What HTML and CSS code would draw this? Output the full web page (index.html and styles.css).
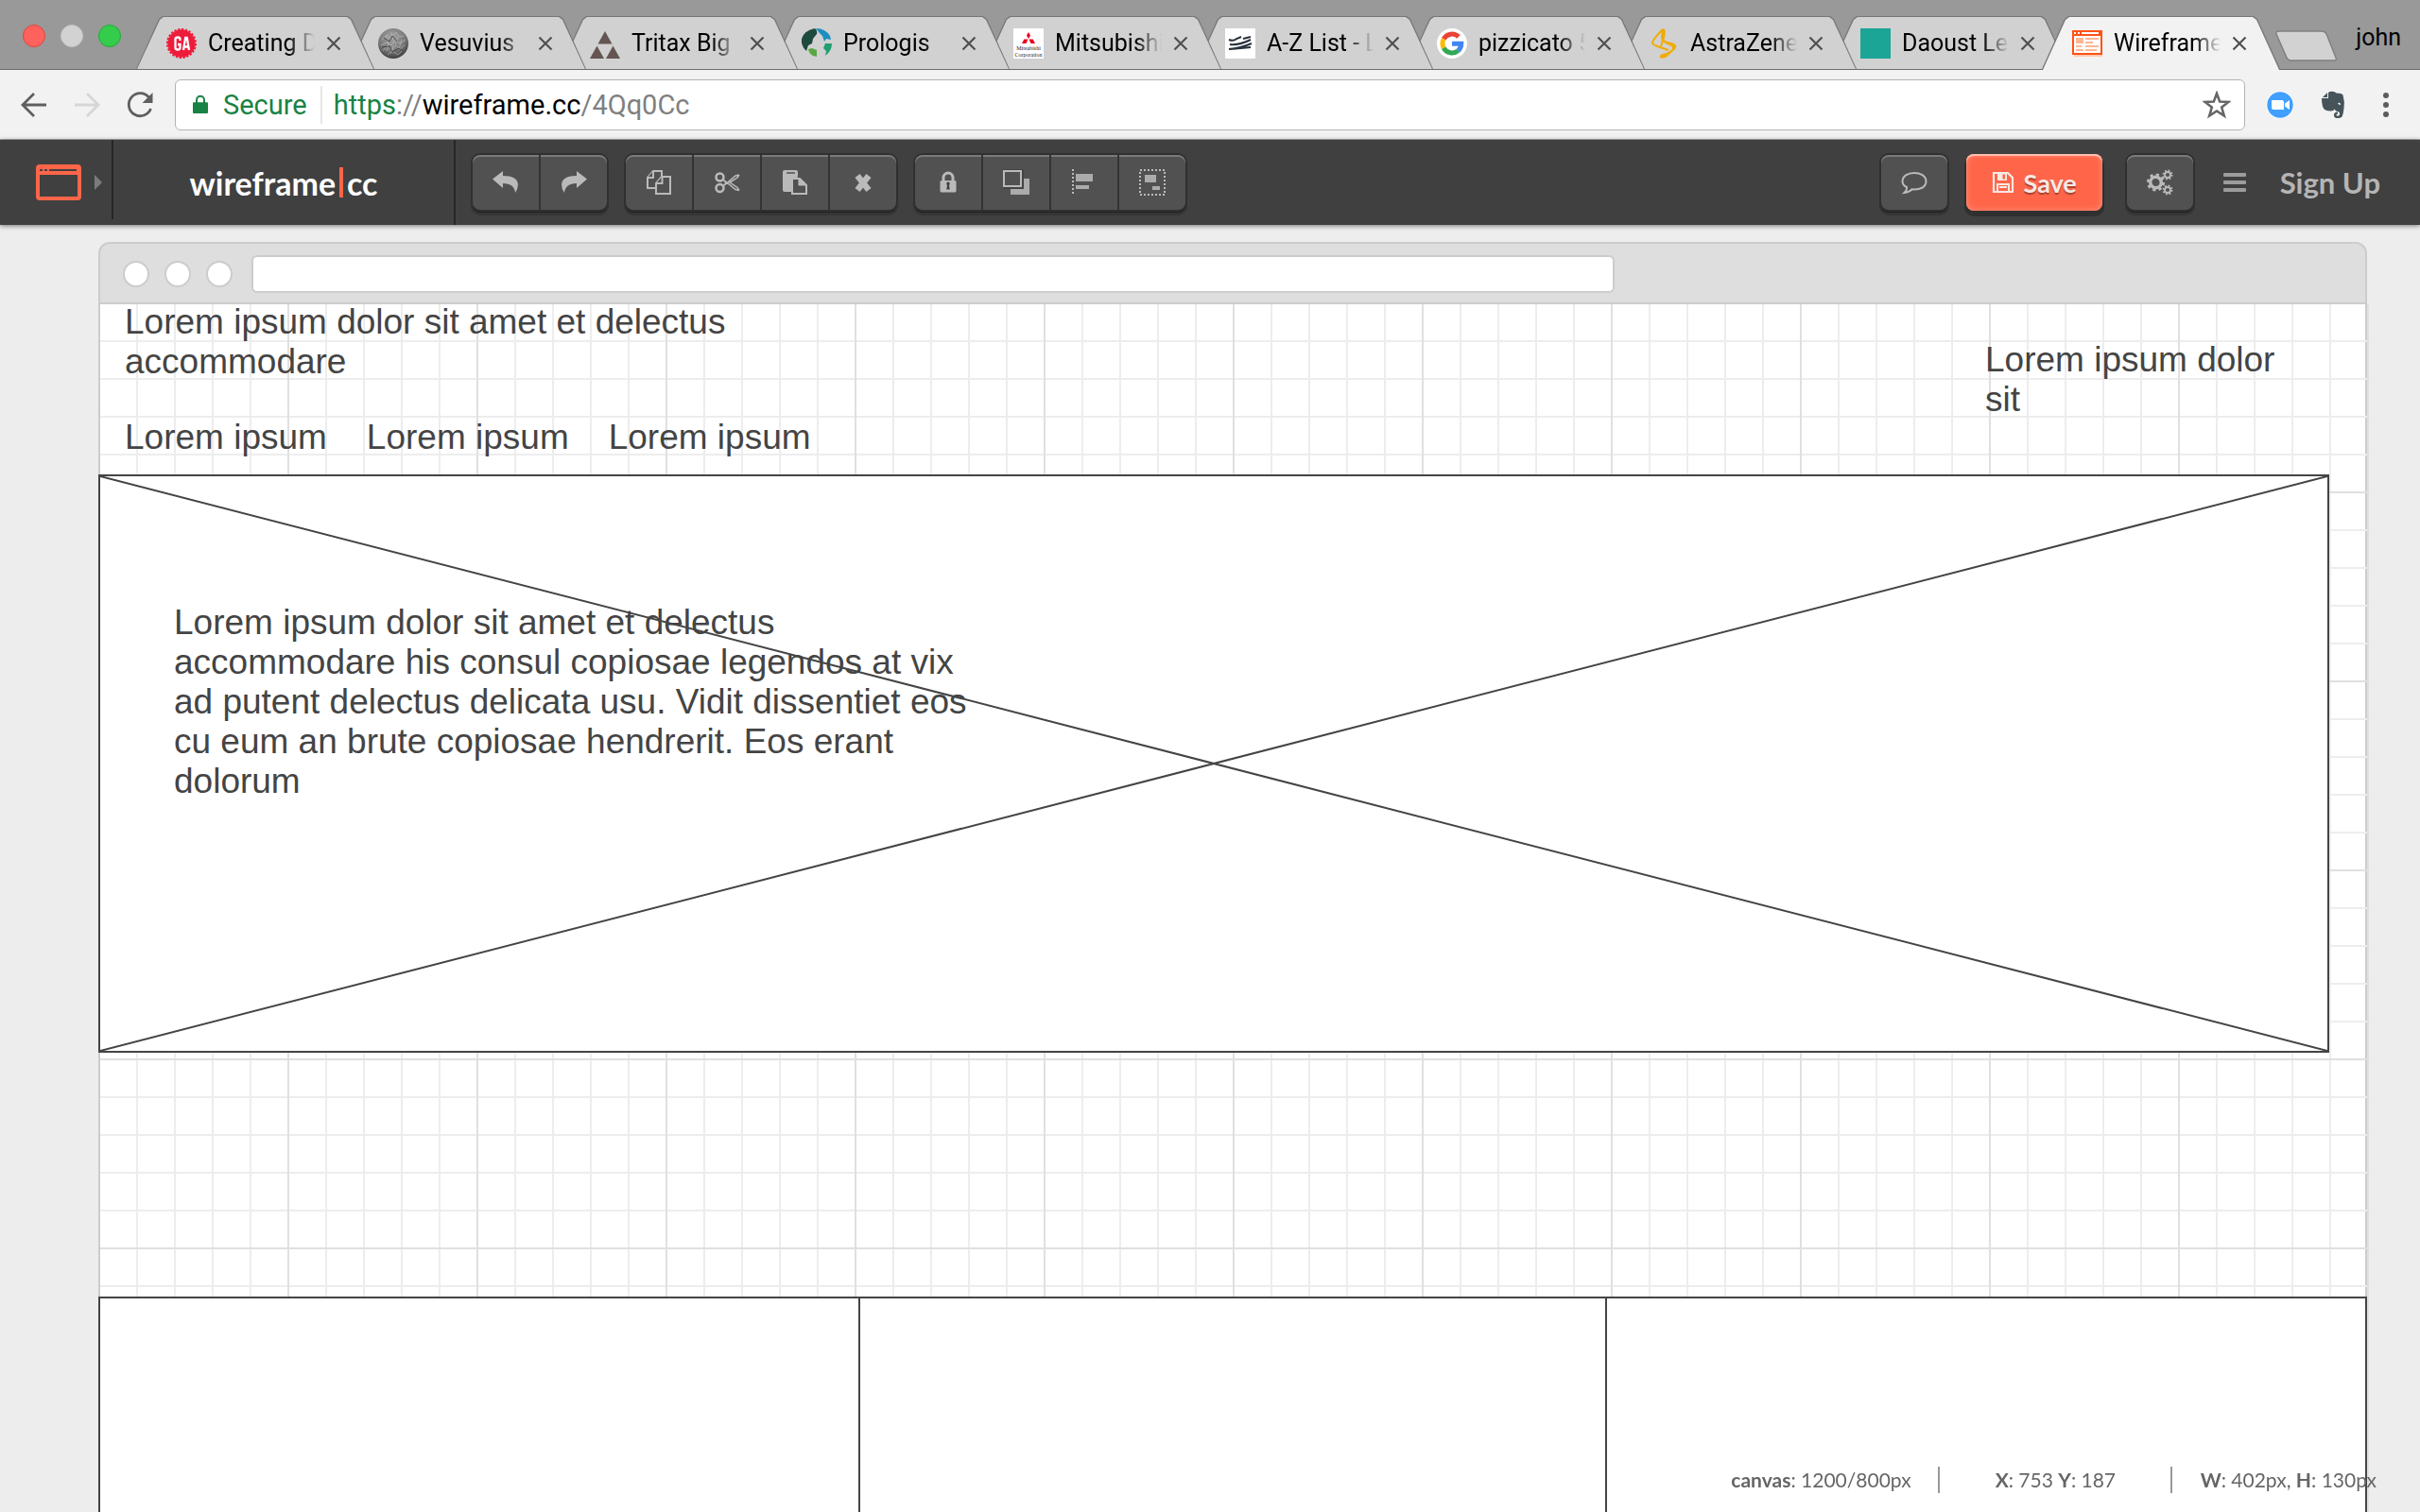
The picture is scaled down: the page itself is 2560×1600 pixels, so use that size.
FILE: index.html
```html
<!DOCTYPE html>
<html lang="en">
<head>
<meta charset="utf-8">
<title>Wireframe.cc</title>
<link rel="stylesheet" href="styles.css">
</head>
<body>
<svg class="defs" aria-hidden="true">
  <symbol id="close" viewBox="0 0 16 16"><path d="M1.500 1.500 14.500 14.500M14.500 1.500 1.500 14.500" fill="none" stroke="#505050" stroke-width="2.200"/></symbol>
</svg>

<header class="tabstrip">
  <div class="lights">
    <button class="light red" aria-label="Close window"></button>
    <button class="light grey" aria-label="Minimise window"></button>
    <button class="light green" aria-label="Zoom window"></button>
  </div>
  <nav class="tabs">
    <div class="tab">
      <svg class="favicon" viewBox="0 0 32 32"><circle cx="16" cy="16" r="14.500" fill="#ee1c3b"/><circle cx="16" cy="16" r="15" fill="none" stroke="#ee1c3b" stroke-width="2" stroke-dasharray="2.400 1.500"/><path d="M14.500 13v-1.500q0-2-2.500-2t-2.500 2v9q0 2 2.500 2t2.500-2V17h-2.500M18 23l2.200-13h1.600L24 23M18.600 19.500h4.800" fill="none" stroke="#fff" stroke-width="2.300"/></svg>
      <span class="label">Creating D</span>
      <button class="close" aria-label="Close tab"><svg viewBox="0 0 16 16"><use href="#close"/></svg></button>
    </div>
    <div class="tab">
      <svg class="favicon" viewBox="0 0 32 32"><defs><radialGradient id="rock" cx=".45" cy=".3" r=".75"><stop offset="0" stop-color="#a5a5a5"/><stop offset=".6" stop-color="#777"/><stop offset="1" stop-color="#333"/></radialGradient></defs><circle cx="16" cy="16" r="16" fill="url(#rock)"/><path d="M4 12l5-5 4 4 6-7 3 5 5-1M3 18l6-3 5 3 4-6 5 4 6-4M5 24l4-5 6 4 4-5 4 4 5-4M10 28l5-4 6 4 4-4M8 8l3 8M14 4l2 8M21 9l-3 8M25 12l-3 10M11 16l-2 8M16 18l-2 8" fill="none" stroke="#c2c2c2" stroke-width="1" opacity=".6"/><path d="M6 10l6 4 3-6 5 6M4 20l8-1 3 6 7-4 4 3" fill="none" stroke="#444" stroke-width="1"/></svg>
      <span class="label">Vesuvius</span>
      <button class="close" aria-label="Close tab"><svg viewBox="0 0 16 16"><use href="#close"/></svg></button>
    </div>
    <div class="tab">
      <svg class="favicon" viewBox="0 0 32 32" fill="#655552"><path d="M16 3l7.500 13.500h-15zM7.500 18.500 15 32H0zM24.500 18.500 32 32H17z"/></svg>
      <span class="label">Tritax Big B</span>
      <button class="close" aria-label="Close tab"><svg viewBox="0 0 16 16"><use href="#close"/></svg></button>
    </div>
    <div class="tab">
      <svg class="favicon" viewBox="0 0 32 32"><path d="M14 0q3 2 2 6l-4 5-1 5-4 2-2 6Q-1 18 0 11 3 2 14 0z" fill="#1f4a3f"/><path d="M15 0q10 0 15 8l1 4-5-1-2 3-2-6-3-3z" fill="#1c8fc0"/><path d="M32 16q0 8-7 13l1-5-3-3 2-5z" fill="#1f9f72"/><path d="M7 22l4-1 5 2v7l-4-1q-4-2-5-7z" fill="#58a840"/></svg>
      <span class="label">Prologis</span>
      <button class="close" aria-label="Close tab"><svg viewBox="0 0 16 16"><use href="#close"/></svg></button>
    </div>
    <div class="tab">
      <svg class="favicon" viewBox="0 0 32 32"><path fill="#fff" d="M0 0h32v32H0z"/><path fill="#e60020" d="M16 4l2 3.500-2 3.500-2-3.500zM15.500 11.500 13.500 16H9l2.300-4.500zM16.500 11.500l2 4.500H23l-2.300-4.500z"/><text class="mini" x="16" y="23" text-anchor="middle">Mitsubishi</text><text class="mini" x="16" y="30" text-anchor="middle">Corporation</text></svg>
      <span class="label">Mitsubishi</span>
      <button class="close" aria-label="Close tab"><svg viewBox="0 0 16 16"><use href="#close"/></svg></button>
    </div>
    <div class="tab">
      <svg class="favicon" viewBox="0 0 32 32"><path fill="#fff" d="M0 0h32v32H0z"/><path d="M4 12q5 2 8-1l5-2M19 11l8-2M5 17q10 1 22-5M4 22q12-1 24-6M5 22q12-1 22-2" fill="none" stroke="#27303d" stroke-width="2"/></svg>
      <span class="label">A-Z List - L</span>
      <button class="close" aria-label="Close tab"><svg viewBox="0 0 16 16"><use href="#close"/></svg></button>
    </div>
    <div class="tab">
      <svg class="favicon" viewBox="0 0 32 32"><circle cx="16" cy="16" r="16" fill="#fff"/><g fill="none" stroke-width="5"><path d="M23 8.900A10 10 0 0 0 7.200 11.300" stroke="#ea4335"/><path d="M7.200 11.300a10 10 0 0 0 0 9.400" stroke="#fbbc05"/><path d="M7.200 20.700A10 10 0 0 0 22.500 23.600" stroke="#34a853"/><path d="M22.500 23.600A10 10 0 0 0 25.800 16.200H16" stroke="#4285f4"/></g></svg>
      <span class="label">pizzicato 5</span>
      <button class="close" aria-label="Close tab"><svg viewBox="0 0 16 16"><use href="#close"/></svg></button>
    </div>
    <div class="tab">
      <svg class="favicon" viewBox="0 0 32 32"><path d="M15 1Q5 11 4 15q0 2 5 4l12 4M15 1q3 1 1 9l-3 9" fill="none" stroke="#f2ab00" stroke-width="2"/><path d="M14 10q3 4 10 5 8 2 4 7-5 5-10 9-8 2-6-2 1-2 7-3l5-3q3-3-2-5-7-2-8-8z" fill="#f2ab00"/><path d="M14 1q4 0 3 5l-3 9-1-6z" fill="#f2ab00"/></svg>
      <span class="label">AstraZene</span>
      <button class="close" aria-label="Close tab"><svg viewBox="0 0 16 16"><use href="#close"/></svg></button>
    </div>
    <div class="tab">
      <svg class="favicon" viewBox="0 0 32 32"><path fill="#1aa596" d="M0 0h32v32H0z"/></svg>
      <span class="label">Daoust Les</span>
      <button class="close" aria-label="Close tab"><svg viewBox="0 0 16 16"><use href="#close"/></svg></button>
    </div>
    <div class="tab active">
      <svg class="favicon" viewBox="0 0 32 32"><path fill="#ffc9b3" d="M2 28h30v2H2z"/><path fill="#ff5216" d="M0 2h32v26H0z"/><path fill="#fff" d="M2 4h2v2H2zM6 4h2v2H6zM10 4h18v2H10zM2 8h28v18H2z"/><path fill="#ffb693" d="M4 10h8v6H4zM14 10h14v2H14zM14 14h8v2h-8zM4 18h6v2H4zM14 18h14v2H14zM4 22h8v2H4zM14 22h12v2H14z"/></svg>
      <span class="label">Wireframe</span>
      <button class="close" aria-label="Close tab"><svg viewBox="0 0 16 16"><use href="#close"/></svg></button>
    </div>
  </nav>
  <button class="new-tab" aria-label="New tab"><svg viewBox="0 0 68 34"><path d="M5 1H50q4 0 5.500 4L65 29q1.500 3-3 3H18q-4 0-5.500-4L2 4Q1 1 5 1z" fill="#d2d2d2" stroke="#808080" stroke-width="1.500"/></svg></button>
  <span class="user">john</span>
</header>

<div class="toolbar">
  <button class="nav" aria-label="Back"><svg viewBox="0 0 30 30"><path d="M28 15H4M15 3 3 15 15 27" fill="none" stroke="#5f5f5f" stroke-width="2.800"/></svg></button>
  <button class="nav" aria-label="Forward"><svg viewBox="0 0 30 30"><path d="M2 15H26M15 3 27 15 15 27" fill="none" stroke="#d6d6d6" stroke-width="2.800"/></svg></button>
  <button class="nav" aria-label="Reload"><svg viewBox="0 0 30 30"><path d="M24.500 7A12 12 0 1 0 26.500 19" fill="none" stroke="#5f5f5f" stroke-width="2.800"/><path d="M28.500 2v11H17.500z" fill="#5f5f5f"/></svg></button>
  <div class="omnibox">
    <svg class="padlock" viewBox="0 0 18 24"><path fill="#188244" d="M1 9h16q1 0 1 1v11q0 1-1 1H1q-1 0-1-1V10q0-1 1-1z"/><path d="M4.500 10V6a4.500 4.500 0 0 1 9 0v4" fill="none" stroke="#188244" stroke-width="2.200"/></svg>
    <span class="secure">Secure</span>
    <span class="url"><span class="scheme">https</span>://<span class="host">wireframe.cc</span>/4Qq0Cc</span>
    <button class="star" aria-label="Bookmark"><svg viewBox="0 0 30 30"><path d="M15 3l3.200 8.600 9.300.3-7.300 5.700 2.600 9L15 21.500 7.200 26.600l2.600-9L2.500 11.900l9.300-.3z" fill="none" stroke="#666" stroke-width="2.600"/></svg></button>
  </div>
  <button class="ext" aria-label="Zoom"><svg viewBox="0 0 30 30"><circle cx="15" cy="15" r="14.500" fill="#fff"/><circle cx="15" cy="15" r="13.700" fill="#409fff"/><path fill="#fff" d="M6 10h11q2 0 2 2v8H8q-2 0-2-2zM20 13.500l5-3.500v10l-5-3.500z"/></svg></button>
  <button class="ext" aria-label="Evernote"><svg viewBox="0 0 30 30"><path d="M10 2l1.500-1q5-1 7 1.500 6 0 7 2 2 7 1 14-.5 6-2 9-2 2-6 1.500-3-1-2.500-4 .5-3 4-2.500v2q-2 0-1.500 1.500.5 1 2.500.5 1.500-1 1-3-1-2-4-2l-1.500-2q-1 2-3.500 2-4 0-7-1.500Q3 17 3 8h7z" fill="#46545a"/><path d="M9 2v5H4z" fill="#46545a"/><path d="M20 13q3-1 3 2l-2-.5z" fill="#fff"/></svg></button>
  <button class="ext" aria-label="Menu"><svg viewBox="0 0 30 30" fill="#5c5c5c"><circle cx="15" cy="5" r="3"/><circle cx="15" cy="15" r="3"/><circle cx="15" cy="25" r="3"/></svg></button>
</div>

<div class="appbar">
  <button class="mode" aria-label="Choose canvas">
    <svg class="window" viewBox="0 0 48 38"><rect x="2" y="2" width="44" height="34" rx="2" fill="none" stroke="#ff6549" stroke-width="4"/><path d="M2 2h44v9H2z" fill="#ff6549"/><path d="M4 5h3v2H4zM9 5h3v2H9zM14 5h29v2H14z" fill="#404040"/></svg>
    <svg class="caret" viewBox="0 0 8 16"><path d="M0 0 8 8 0 16z" fill="#7c7c7c"/></svg>
  </button>
  <a class="brand" href="#">wireframe<i></i>cc</a>
  <div class="group">
    <button aria-label="Undo"><svg viewBox="0 0 28 28"><path d="M11 2v5q15 0 16 9 0 5-3 9-1-10-13-10v5L0 10.500z" fill="#bababa"/></svg></button>
    <button aria-label="Redo"><svg viewBox="0 0 28 28"><path d="M17 2v5Q2 7 1 16q0 5 3 9 1-10 13-10v5l11-9.500z" fill="#bababa"/></svg></button>
  </div>
  <div class="group">
    <button aria-label="Copy"><svg viewBox="0 0 28 28"><g fill="#515151" stroke="#bababa" stroke-width="2"><path d="M2 9 8 2h9v18H2z"/><path d="M8 2v7H2"/><path d="M11 15l6-7h9v18H11z"/><path d="M17.500 8v7H11"/></g></svg></button>
    <button aria-label="Cut"><svg viewBox="0 0 28 28" fill="none" stroke="#bababa"><circle cx="6.500" cy="8.500" r="4" stroke-width="2.500"/><circle cx="6.500" cy="20" r="4" stroke-width="2.500"/><path d="M10 11 23 21.500l4 1M10 18 23 7l4-1M27 6l-2 3-8 5 8 5.500 2 3M10 11l3 3.500L10 18" stroke-width="1.500"/></svg></button>
    <button aria-label="Paste"><svg viewBox="0 0 28 28"><path d="M3 1h12q2 0 2 2v5l-6 7v9H3q-2 0-2-2V3q0-2 2-2z" fill="#bababa"/><path d="M5 4h9" stroke="#515151" stroke-width="1.500"/><path d="M11 10h8l7 7v9H11z" fill="#515151" stroke="#bababa" stroke-width="2"/><path d="M18 9v8h8" fill="#bababa" stroke="#bababa"/></svg></button>
    <button aria-label="Delete"><svg viewBox="0 0 28 28"><path d="M8 7 20 22M20 7 8 22" stroke="#bababa" stroke-width="6.500"/></svg></button>
  </div>
  <div class="group">
    <button aria-label="Lock"><svg viewBox="0 0 28 28"><rect x="5.500" y="12" width="17" height="12.500" rx="1.500" fill="#bababa"/><path d="M9 13V9a5 5 0 0 1 10 0v4" fill="none" stroke="#bababa" stroke-width="3"/><path d="M12.500 16a1.700 1.700 0 1 1 3 0l-.5 1.500.8 4h-3.600l.8-4z" fill="#404040"/></svg></button>
    <button aria-label="Arrange"><svg viewBox="0 0 28 28"><path d="M8 10h20v17H8z" fill="#ababab"/><path d="M0 0h22v21H0z" fill="#444"/><path d="M1 2h18v16H1z" fill="#515151" stroke="#bababa" stroke-width="2"/></svg></button>
    <button aria-label="Align"><svg viewBox="0 0 28 28"><path d="M2 0v28" stroke="#bababa" stroke-width="2" stroke-dasharray="2"/><path d="M5 5h18v8H5zM5 17h14v4H5z" fill="#ababab"/></svg></button>
    <button aria-label="Group"><svg viewBox="0 0 28 28"><path d="M1 1h26v26H1z" fill="none" stroke="#bababa" stroke-width="2" stroke-dasharray="2"/><path d="M6 6h12v8H6zM14 18h8v4h-8z" fill="#ababab"/></svg></button>
  </div>
  <div class="actions">
    <div class="group"><button aria-label="Comments"><svg viewBox="0 0 28 28"><path d="M14 4c7 0 12.500 3.500 12.500 9S21 21.500 14 21.500l-2.500-.3Q9 24.500 3.500 25q3-2.500 2.500-6-4.500-2-4.500-6C1.500 7.500 7 4 14 4z" fill="none" stroke="#bababa" stroke-width="2"/></svg></button></div>
    <button class="save"><svg viewBox="0 0 24 24"><path d="M2 2h15l5 5v15H2z" fill="none" stroke="#f6e8e4" stroke-width="2.200"/><path d="M6 2h10v8H6z" fill="#f6e8e4"/><path d="M11.500 3.500h2.500v5h-2.500z" fill="#ff6549"/><path d="M6 22v-8h12v8M8 17h8" fill="none" stroke="#f6e8e4" stroke-width="2"/></svg>Save</button>
    <div class="group gears"><button aria-label="Settings"><svg viewBox="0 0 28 28" fill="none" stroke="#bababa"><circle cx="9.500" cy="14" r="5.800" stroke-width="3.500"/><circle cx="9.500" cy="14" r="8.300" stroke-width="2.600" stroke-dasharray="3.260 3.260"/><circle cx="22" cy="6" r="3" stroke-width="1.800"/><circle cx="22" cy="6" r="4.500" stroke-width="2" stroke-dasharray="1.770 1.770"/><circle cx="22" cy="22" r="3" stroke-width="1.800"/><circle cx="22" cy="22" r="4.500" stroke-width="2" stroke-dasharray="1.770 1.770"/></svg></button></div>
    <button class="menu" aria-label="Menu"><svg viewBox="0 0 24 22" fill="#9c9c9c"><rect y="1" width="24" height="4" rx="1"/><rect y="9" width="24" height="4" rx="1"/><rect y="17" width="24" height="4" rx="1"/></svg></button>
    <a class="signup" href="#">Sign Up</a>
  </div>
</div>

<main class="workspace">
  <div class="frame-head">
    <i class="dot"></i><i class="dot"></i><i class="dot"></i>
    <div class="frame-url"></div>
  </div>
  <div class="canvas">
    <p class="item title">Lorem ipsum dolor sit amet et delectus accommodare</p>
    <p class="item side">Lorem ipsum dolor sit</p>
    <div class="item links"><span>Lorem ipsum</span><span>Lorem ipsum</span><span>Lorem ipsum</span></div>
    <div class="item hero">
      <svg class="cross" viewBox="0 0 100 100" preserveAspectRatio="none"><path d="M0 0 100 100M100 0 0 100" vector-effect="non-scaling-stroke" stroke="#444" stroke-width="2"/></svg>
      <p class="hero-text">Lorem ipsum dolor sit amet et delectus accommodare his consul copiosae legendos at vix ad putent delectus delicata usu. Vidit dissentiet eos cu eum an brute copiosae hendrerit. Eos erant dolorum</p>
    </div>
    <div class="item boxes"><div class="box"></div><div class="box"></div><div class="box"></div></div>
  </div>
</main>

<footer class="status">
  <span class="size"><b>canvas</b>: 1200/800px</span>
  <span class="pos"><b>X</b>: 753 <b>Y</b>: 187</span>
  <span class="dim"><b>W</b>: 402px, <b>H</b>: 130px</span>
</footer>
</body>
</html>
```
FILE: styles.css
```css
* { box-sizing: border-box; }

body {
  margin: 0;
  height: 100vh;
  display: flex;
  flex-direction: column;
  overflow: hidden;
  background: #ededed;
  font-family: Roboto, sans-serif;
}

button {
  margin: 0;
  padding: 0;
  border: 0;
  background: none;
  font: inherit;
}

svg { display: block; }
.defs { display: none; }

/* Browser tab strip */
.tabstrip {
  flex: none;
  display: flex;
  align-items: flex-start;
  height: 74px;
  padding-right: 20px;
  background: linear-gradient(#6c6c6c, #6c6c6c) 0 100% / 100% 1px no-repeat, #999;
}

.lights {
  flex: none;
  display: flex;
  gap: 16px;
  width: 144px;
  padding: 26px 0 0 24px;
}

.light {
  width: 24px;
  height: 24px;
  border: 1px solid;
  border-radius: 50%;
}

.red { background: #ff625c; border-color: #e0443e; }
.grey { background: #d2d2d2; border-color: #c4c4c4; }
.green { background: #34cc4b; border-color: #24a938; }

.tabs {
  flex: 0 1 2268px;
  display: flex;
  min-width: 0;
  padding: 17px 28px 0 0;
  isolation: isolate;
}

.tab {
  position: relative;
  z-index: 0;
  flex: 0 1 252px;
  min-width: 0;
  margin-right: -28px;
  height: 57px;
  padding: 0 35px 0 32px;
  display: flex;
  align-items: center;
  gap: 12px;
}

.tab::before,
.tab::after {
  content: "";
  position: absolute;
  z-index: -1;
  inset: 0 0 1px;
  clip-path: polygon(0 100%, 24px 3px, 28px 0, calc(100% - 28px) 0, calc(100% - 24px) 3px, 100% 100%);
  background: #777;
}

.tab::after {
  inset: 1px 1px 1px;
  background: #d1d1d1;
}

.tab:nth-child(1) { z-index: 9; }
.tab:nth-child(2) { z-index: 8; }
.tab:nth-child(3) { z-index: 7; }
.tab:nth-child(4) { z-index: 6; }
.tab:nth-child(5) { z-index: 5; }
.tab:nth-child(6) { z-index: 4; }
.tab:nth-child(7) { z-index: 3; }
.tab:nth-child(8) { z-index: 2; }
.tab:nth-child(9) { z-index: 1; }
.tab.active { z-index: 10; }
.tab.active::after { inset: 1px 1px 0; background: #f2f2f2; }

.favicon {
  flex: none;
  width: 32px;
  height: 32px;
}

.mini { font: 6px "Liberation Serif", serif; fill: #222; }

.label {
  flex: 1;
  min-width: 0;
  overflow: hidden;
  white-space: nowrap;
  font-size: 25px;
  line-height: 32px;
  color: #000;
  mask-image: linear-gradient(90deg, #000 75%, transparent);
}

.close svg { width: 16px; height: 16px; }

.new-tab { flex: none; margin: 32px 0 0 -6px; }
.new-tab svg { width: 68px; height: 34px; }

.user {
  margin-left: auto;
  padding-top: 24px;
  font-size: 25px;
  line-height: 32px;
}

/* Browser toolbar */
.toolbar {
  flex: none;
  display: flex;
  align-items: center;
  height: 74px;
  padding: 0 21px;
  background: #f2f2f2;
  border-bottom: 1px solid #adadad;
}

.nav { flex: none; margin-right: 26px; }
.nav svg, .ext svg, .star svg { width: 30px; height: 30px; }
.nav:nth-child(3) { margin-right: 22px; }

.omnibox {
  flex: 1;
  display: flex;
  align-items: center;
  height: 54px;
  margin-right: 22px;
  padding: 0 14px 0 18px;
  background: #fff;
  border: 1px solid #b3b3b3;
  border-radius: 6px;
  font-size: 29px;
  line-height: 40px;
}

.padlock { width: 16px; height: 22px; margin-right: 16px; }

.secure {
  padding-right: 14px;
  border-right: 2px solid #e6e6e6;
  color: #188244;
}

.url { flex: 1; padding-left: 12px; color: #808080; }
.scheme { color: #188244; }
.host { color: #000; }

.ext { flex: none; margin-left: 26px; }
.omnibox + .ext { margin-left: 0; }

/* Application bar */
.appbar {
  position: relative;
  z-index: 2;
  flex: none;
  display: flex;
  align-items: center;
  height: 90px;
  background: #404040;
  box-shadow: 0 1px 5px rgba(0, 0, 0, .5);
  font-family: Lato, sans-serif;
}

.mode {
  align-self: stretch;
  display: flex;
  align-items: center;
  gap: 14px;
  width: 120px;
  margin-bottom: 6px;
  padding: 6px 0 0 38px;
  border-right: 2px solid #262626;
}

.window { width: 48px; height: 38px; }
.caret { width: 8px; height: 16px; }

.brand {
  align-self: stretch;
  display: flex;
  align-items: center;
  justify-content: center;
  width: 362px;
  margin-right: 18px;
  border-right: 2px solid #262626;
  color: #fff;
  font-size: 34px;
  font-weight: bold;
  text-decoration: none;
}

.brand i { width: 4px; height: 32px; margin: 0 4px; background: #ff6549; }

.group {
  display: flex;
  gap: 2px;
  height: 58px;
  margin-right: 20px;
  border-radius: 8px;
  background: #333;
  box-shadow: 0 0 0 2px #303030, 0 2px 0 1px #1f1f1f, 0 4px 0 2px #353535;
}

.group button {
  display: flex;
  align-items: center;
  justify-content: center;
  width: 70px;
  background: #515151;
  box-shadow: inset 0 2px #7a7a7a;
}

.group button:first-child { border-radius: 8px 0 0 8px; }
.group button:last-child { border-radius: 0 8px 8px 0; }
.group button:only-child { border-radius: 8px; }
.group svg { width: 28px; height: 28px; }

.actions {
  display: flex;
  align-items: center;
  margin-left: auto;
  padding-right: 42px;
}

.save {
  display: flex;
  align-items: center;
  justify-content: center;
  gap: 10px;
  width: 144px;
  height: 60px;
  margin-right: 26px;
  border-radius: 8px;
  background: #ff6549;
  box-shadow: inset 0 2px 1px #ffc4b5, inset 0 0 6px #ff9a84, 0 4px 0 2px #303030;
  color: #f6e8e4;
  font-size: 27px;
  font-weight: bold;
  text-shadow: 0 2px 1px rgba(0, 0, 0, .35);
}

.save svg { width: 24px; height: 24px; }
.gears { margin-right: 32px; }
.menu svg { width: 24px; height: 22px; }

.signup {
  margin-left: 36px;
  color: #b5b5b5;
  font-size: 31px;
  font-weight: bold;
  text-decoration: none;
}

/* Drawing area */
.workspace {
  flex: 1;
  min-height: 0;
  display: flex;
  flex-direction: column;
  padding: 18px 56px 0 104px;
}

.frame-head {
  flex: none;
  display: flex;
  align-items: center;
  height: 66px;
  padding: 4px 24px 2px;
  border: 2px solid #ccc;
  border-radius: 12px 12px 0 0;
  background: #dedede;
}

.dot {
  flex: none;
  width: 28px;
  height: 28px;
  margin-right: 16px;
  border: 2px solid #ccc;
  border-radius: 50%;
  background: #fff;
}

.frame-url {
  flex: 0 1 1442px;
  height: 40px;
  margin-left: 4px;
  border: 2px solid #ccc;
  border-radius: 6px;
  background: #fff;
}

.canvas {
  position: relative;
  flex: 1;
  min-height: 0;
  background:
    linear-gradient(#ccc, #ccc) 0 0 / 2px 100% no-repeat,
    linear-gradient(#e0e0e0 2px, transparent 2px) 0 -2px / 100% 200px,
    linear-gradient(90deg, #e0e0e0 2px, transparent 2px) 0 0 / 200px 100%,
    linear-gradient(#ededed 2px, transparent 2px) 0 -2px / 100% 40px,
    linear-gradient(#ccc, #ccc) 100% 0 / 2px 100% no-repeat,
    linear-gradient(90deg, #ededed 2px, transparent 2px) 0 0 / 40px 100%,
    #fff;
  box-shadow: 2px 0 #e0e0e0;
  color: #444;
  font: 37px/42px "Liberation Sans", Arial, sans-serif;
}

.item { position: absolute; margin: 0; }
.title { left: 28px; top: -2px; width: 720px; }
.side { right: 62px; top: 38px; width: 342px; }
.links { left: 28px; top: 120px; display: flex; gap: 42px; }

.hero {
  left: 0;
  right: 40px;
  top: 180px;
  height: 612px;
  border: 2px solid #444;
  background: #fff;
}

.cross {
  position: absolute;
  width: 100%;
  height: 100%;
}

.hero-text {
  position: relative;
  width: 860px;
  margin: 134px 0 0 78px;
}

.boxes {
  left: 0;
  right: 0;
  top: 1050px;
  bottom: 0;
  display: flex;
  border: solid #444;
  border-width: 2px 2px 0 0;
  background: #fff;
}

.box { flex: 804; border-left: 2px solid #444; }
.box:nth-child(2) { flex-grow: 790; }

/* Status readout */
.status {
  position: fixed;
  z-index: 3;
  right: 46px;
  bottom: 20px;
  display: flex;
  color: #666;
  font: 21px/28px Lato, sans-serif;
}

.size { padding-right: 28px; border-right: 2px solid #999; }
.pos { width: 246px; padding-left: 59px; border-right: 2px solid #999; }
.dim { padding-left: 30px; }
```
